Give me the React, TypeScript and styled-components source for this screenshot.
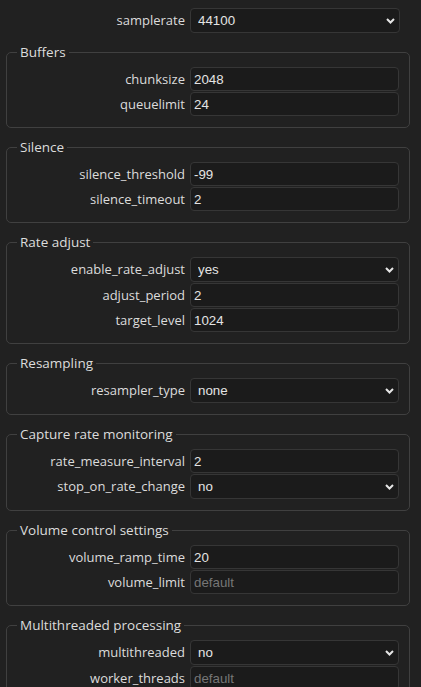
import React from "react";
import styled, { createGlobalStyle } from "styled-components";

const GlobalStyle = createGlobalStyle`
  html, body {
    margin: 0;
    background: #212121;
    overflow: hidden;
  }
  * { box-sizing: border-box; }
`;

const Page = styled.div`
  padding: 8px 11px 0 6px;
  font-family: "Open Sans", "Noto Sans", sans-serif;
  font-size: 13px;
  color: #dcdcdc;
`;

const Grid = styled.div<{ $top?: boolean }>`
  display: grid;
  grid-template-columns: 1fr ${(p) => (p.$top ? "210px" : "209px")};
  column-gap: 5px;
  row-gap: 1px;
  align-items: center;
  padding: ${(p) => (p.$top ? "0 10px 11px 11px" : "0")};
`;

const Group = styled.fieldset`
  margin: 0 0 11px;
  border: 1px solid #404040;
  border-radius: 5px;
  padding: 6px 10px 11px;
  min-width: 0;
`;

const Legend = styled.legend`
  padding: 0 3px;
  font-size: 13.5px;
  line-height: 17px;
  color: #dcdcdc;
`;

const Label = styled.label`
  text-align: right;
  white-space: nowrap;
  line-height: 17px;
`;

const Input = styled.input`
  height: 24px;
  width: 100%;
  margin: 0;
  padding: 0 3px;
  background: #1b1b1b;
  border: 1px solid #363636;
  border-radius: 4px;
  color: #e4e4e4;
  font-family: "Liberation Sans", Arial, sans-serif;
  font-size: 13.33px;
  outline: none;

  &::placeholder {
    color: #767676;
  }
`;

const SelectWrap = styled.div`
  position: relative;
  height: 25px;
`;

const Select = styled.select`
  appearance: none;
  height: 25px;
  width: 100%;
  margin: 0;
  padding: 0 20px 0 7px;
  background: #1b1b1b;
  border: 1px solid #363636;
  border-radius: 4px;
  color: #e4e4e4;
  font-family: "Liberation Sans", Arial, sans-serif;
  font-size: 13.33px;
  outline: none;
`;

const Chevron = styled.svg`
  position: absolute;
  right: 5px;
  top: 10px;
  pointer-events: none;
`;

type Field =
  | { name: string; kind: "input"; value?: string }
  | { name: string; kind: "select"; value: string };

const Control = ({ f }: { f: Field }) =>
  f.kind === "select" ? (
    <SelectWrap>
      <Select defaultValue={f.value}>
        <option>{f.value}</option>
      </Select>
      <Chevron width="9" height="6" viewBox="0 0 9 6">
        <path d="M1 1 L4.5 4.5 L8 1" fill="none" stroke="#e6e6e6" strokeWidth="2" />
      </Chevron>
    </SelectWrap>
  ) : f.value !== undefined ? (
    <Input defaultValue={f.value} />
  ) : (
    <Input placeholder="default" />
  );

const groups: { title: string; fields: Field[] }[] = [
  {
    title: "Buffers",
    fields: [
      { name: "chunksize", kind: "input", value: "2048" },
      { name: "queuelimit", kind: "input", value: "24" },
    ],
  },
  {
    title: "Silence",
    fields: [
      { name: "silence_threshold", kind: "input", value: "-99" },
      { name: "silence_timeout", kind: "input", value: "2" },
    ],
  },
  {
    title: "Rate adjust",
    fields: [
      { name: "enable_rate_adjust", kind: "select", value: "yes" },
      { name: "adjust_period", kind: "input", value: "2" },
      { name: "target_level", kind: "input", value: "1024" },
    ],
  },
  {
    title: "Resampling",
    fields: [{ name: "resampler_type", kind: "select", value: "none" }],
  },
  {
    title: "Capture rate monitoring",
    fields: [
      { name: "rate_measure_interval", kind: "input", value: "2" },
      { name: "stop_on_rate_change", kind: "select", value: "no" },
    ],
  },
  {
    title: "Volume control settings",
    fields: [
      { name: "volume_ramp_time", kind: "input", value: "20" },
      { name: "volume_limit", kind: "input" },
    ],
  },
  {
    title: "Multithreaded processing",
    fields: [
      { name: "multithreaded", kind: "select", value: "no" },
      { name: "worker_threads", kind: "input" },
    ],
  },
];

export default function App() {
  return (
    <>
      <GlobalStyle />
      <Page>
        <Grid $top>
          <Label>samplerate</Label>
          <Control f={{ name: "samplerate", kind: "select", value: "44100" }} />
        </Grid>
        {groups.map((g) => (
          <Group key={g.title}>
            <Legend>{g.title}</Legend>
            <Grid>
              {g.fields.map((f) => (
                <React.Fragment key={f.name}>
                  <Label>{f.name}</Label>
                  <Control f={f} />
                </React.Fragment>
              ))}
            </Grid>
          </Group>
        ))}
      </Page>
    </>
  );
}
